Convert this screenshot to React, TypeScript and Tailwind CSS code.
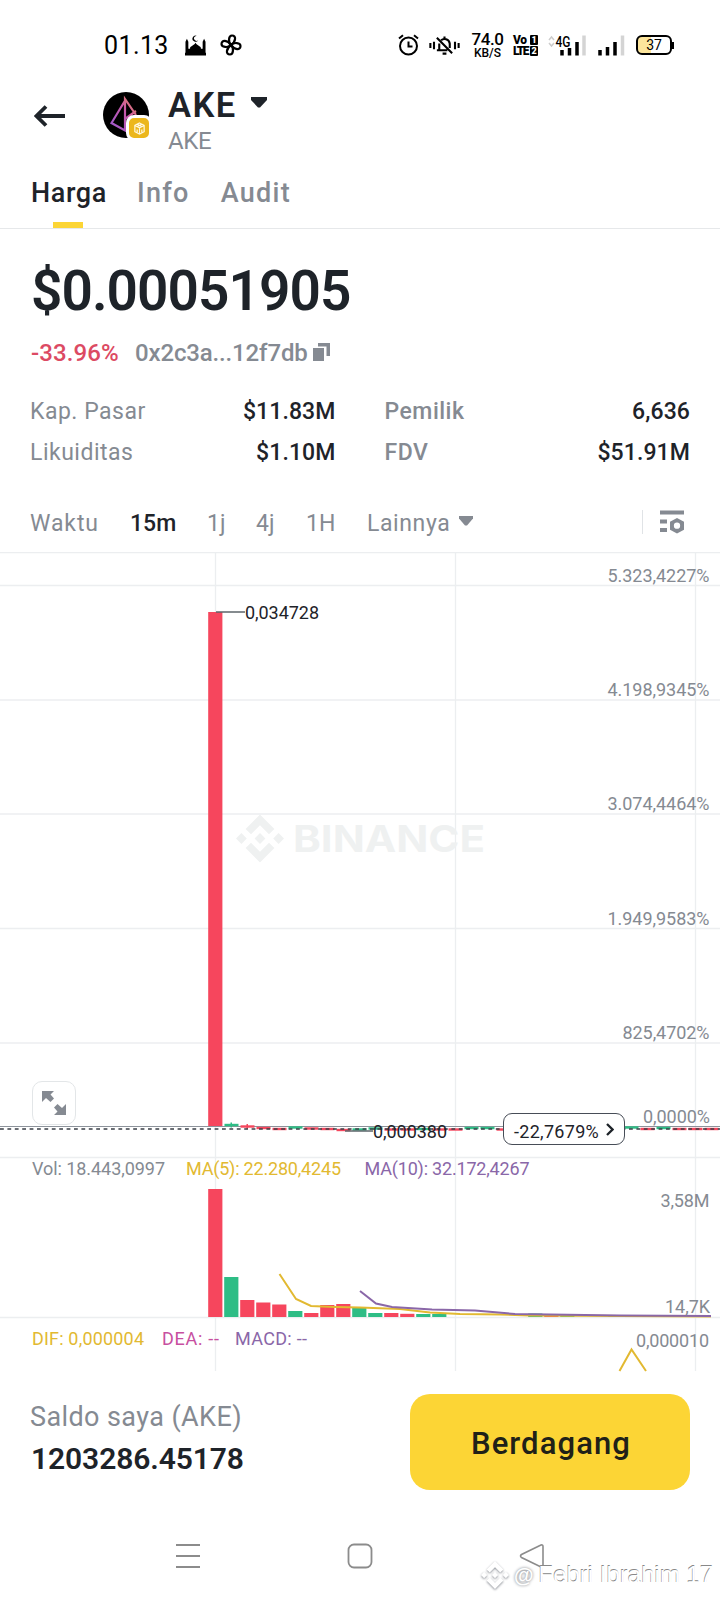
type Candle = { up: boolean; y: number; wick?: boolean };

const TABS = ["Info", "Audit"];

const GRID_Y = [33.5, 148, 262, 376.5, 491, 605.5, 765.5];
const GRID_X = [215.5, 455.5, 695.5];

const AXIS_LABELS = [
  { text: "5.323,4227%", x: 607.5, y: 30, width: 102 },
  { text: "4.198,9345%", x: 607.5, y: 144, width: 102 },
  { text: "3.074,4464%", x: 607.5, y: 258, width: 102 },
  { text: "1.949,9583%", x: 607.5, y: 373, width: 102 },
  { text: "825,4702%", x: 622.5, y: 487, width: 87 },
  { text: "0,0000%", x: 643, y: 571, width: 67 },
  { text: "3,58M", x: 660.5, y: 655, width: 49 },
  { text: "14,7K", x: 665, y: 761, width: 45 },
  { text: "0,000010", x: 636, y: 795, width: 73 },
];

const LEGENDS = [
  { text: "Vol: 18.443,0997", x: 32, y: 623, width: 133, color: "#858a92" },
  { text: "MA(5): 22.280,4245", x: 186, y: 623, width: 155, color: "#e2b931" },
  { text: "MA(10): 32.172,4267", x: 364.5, y: 623, width: 165, color: "#8a67a8" },
  { text: "DIF: 0,000004", x: 32, y: 793, width: 112, color: "#e2b931" },
  { text: "DEA: --", x: 162, y: 793, width: 57, color: "#c74fa0" },
  { text: "MACD: --", x: 235, y: 793, width: 72, color: "#8a67a8" },
];

const CANDLES: Candle[] = [
  { up: true, y: 573, wick: true },
  { up: false, y: 574.5, wick: true },
  { up: false, y: 576 },
  { up: false, y: 577 },
  { up: true, y: 575.5 },
  { up: false, y: 576.5 },
  { up: false, y: 577 },
  { up: false, y: 578 },
  { up: true, y: 577.5 },
  { up: true, y: 576.5 },
  { up: false, y: 577.5 },
  { up: false, y: 577.5 },
  { up: true, y: 577 },
  { up: false, y: 577.5 },
  { up: false, y: 577.5 },
  { up: true, y: 576 },
  { up: true, y: 576 },
  { up: false, y: 577.5 },
  { up: true, y: 577 },
  { up: true, y: 576 },
  { up: false, y: 577 },
  { up: true, y: 576 },
  { up: true, y: 576 },
  { up: true, y: 575 },
  { up: true, y: 575 },
  { up: true, y: 575.5 },
  { up: false, y: 577 },
  { up: true, y: 576 },
  { up: false, y: 577 },
  { up: false, y: 577 },
  { up: false, y: 577 },
];

const VOLUMES = [
  { up: false, h: 128 },
  { up: true, h: 40 },
  { up: false, h: 17 },
  { up: false, h: 14.5 },
  { up: false, h: 12.5 },
  { up: true, h: 6 },
  { up: false, h: 4 },
  { up: false, h: 12 },
  { up: false, h: 13 },
  { up: true, h: 9 },
  { up: true, h: 4 },
  { up: false, h: 4 },
  { up: false, h: 3.2 },
  { up: true, h: 3 },
  { up: true, h: 3 },
  { up: false, h: 0 },
  { up: false, h: 0 },
  { up: false, h: 0 },
  { up: false, h: 0 },
  { up: false, h: 0 },
  { up: true, h: 3.5 },
  { up: false, h: 2 },
  { up: true, h: 2 },
  { up: false, h: 0 },
  { up: false, h: 0 },
  { up: true, h: 2 },
];

const RED = "#f6465d";
const GREEN = "#2ebd85";

function BinanceMark({ className }: { className?: string }) {
  return (
    <svg viewBox="0 0 48 48" className={className} fill="currentColor">
      <path d="M24 0 38.4 14.4 33 19.8 24 10.8 15 19.8 9.6 14.4Z" />
      <path d="M24 48 38.4 33.6 33 28.2 24 37.2 15 28.2 9.6 33.6Z" />
      <path d="M5.4 18.6 10.8 24 5.4 29.4 0 24Z" />
      <path d="M42.6 18.6 48 24 42.6 29.4 37.2 24Z" />
      <path d="M24 18.6 29.4 24 24 29.4 18.6 24Z" />
    </svg>
  );
}

function StatusBar() {
  return (
    <div className="flex h-[88px] items-center pt-[2px] pl-[104px] text-black">
      <span className="w-[81px] text-[25px] leading-none tracking-[0.4px]">01.13</span>
      {/* mosque */}
      <svg className="h-[21px] w-[21px]" viewBox="0 0 22 21" fill="currentColor">
        <path d="M0.500 6.500 2 3.500 3.500 6.500V14H5.500C4 11.500 9 11 11 7.500 13 11 18 11.500 16.500 14H18.500V6.500L20 3.500 21.500 6.500V18H22V21H0V18H0.500Z" />
        <path d="M12.500 0.500A3.200 3.200 0 1 0 13.800 4.900 2.600 2.600 0 1 1 12.500 0.500Z" />
      </svg>
      {/* pinwheel */}
      <svg
        className="ml-[14px] h-[22px] w-[22px]"
        viewBox="0 0 22 22"
        fill="none"
        stroke="currentColor"
        strokeWidth="2.200"
        strokeLinejoin="round"
      >
        <path d="M11 11C8 8 8.500 1.500 12 1.500 16.500 1.500 16 7.500 11 11Z" />
        <path d="M11 11C14 8 20.500 8.500 20.500 12 20.500 16.500 14.500 16 11 11Z" />
        <path d="M11 11C14 14 13.500 20.500 10 20.500 5.500 20.500 6 14.500 11 11Z" />
        <path d="M11 11C8 14 1.500 13.500 1.500 10 1.500 5.500 7.500 6 11 11Z" />
      </svg>
      <svg
        className="ml-[156px] h-[22px] w-[21px]"
        viewBox="0 0 21 22"
        fill="none"
        stroke="currentColor"
        strokeWidth="2"
      >
        <circle cx="10.500" cy="12" r="8.500" />
        <path d="M10.500 7.500V12.500H14.500M1 4.500 5 1.200M20 4.500 16 1.200" />
      </svg>
      {/* muted bell with vibration marks */}
      <svg
        className="ml-[10px] h-[21px] w-[31px]"
        viewBox="0 0 32 22"
        fill="none"
        stroke="currentColor"
        strokeWidth="2.200"
      >
        <path d="M1.200 8.500V13.500M5 7V15M27 7V15M30.800 8.500V13.500" />
        <path d="M8 3 24 19M8 16H19M10.500 16V9M12.500 5.500C15 3 21 4 21.500 9V13.500M16 1.500V4M14 19.500H18" />
      </svg>
      <div className="ml-[11px] flex w-[33px] flex-col items-center">
        <span className="text-[17px] leading-[15px] font-medium tracking-[-0.4px]">74.0</span>
        <span className="mt-px text-[12px] leading-[11px] font-medium">KB/S</span>
      </div>
      <div className="ml-[9px] flex w-[25px] flex-col gap-px text-[12px] leading-[10px] font-black">
        <div className="flex justify-between">
          <span className="tracking-[-0.5px]">Vo</span>
          <span className="w-[8px] rounded-[1px] bg-black text-center text-[9px] text-white">1</span>
        </div>
        <div className="flex justify-between">
          <span className="tracking-[-1.6px]">LTE</span>
          <span className="w-[8px] rounded-[1px] bg-black text-center text-[9px] text-white">2</span>
        </div>
      </div>
      <svg className="ml-[10px] h-[22px] w-[38px]" viewBox="0 0 38 22">
        <path d="M1 6 3.500 3 6 6M1 9 3.500 12 6 9" fill="none" stroke="#ccc" strokeWidth="1.500" />
        <text x="7.500" y="12.500" fontSize="14.500" fontWeight="500" textLength="15" lengthAdjust="spacingAndGlyphs">
          4G
        </text>
        <path d="M14 21.500V16M21.500 21.500V14M29 21.500V8" stroke="#000" strokeWidth="3.500" />
        <path d="M36 21.500V1.500" stroke="#d4d4d4" strokeWidth="3.500" />
      </svg>
      <svg className="ml-[12px] h-[22px] w-[27px]" viewBox="0 0 27 22">
        <path d="M2 21.500V16M9.500 21.500V13M17 21.500V8" stroke="#000" strokeWidth="3.500" />
        <path d="M24.500 21.500V1.500" stroke="#d4d4d4" strokeWidth="3.500" />
      </svg>
      <div className="ml-[11px] flex items-center">
        <div className="flex h-[20px] w-[36px] items-center justify-center rounded-[6px] border-2 border-black bg-linear-to-r from-[#fce59c] from-40% to-white to-40% text-[14px] leading-none">
          37
        </div>
        <div className="h-[7px] w-[2px] bg-black" />
      </div>
    </div>
  );
}

function TokenHeader() {
  return (
    <header className="flex h-[64px] items-start pl-[34px] text-[#1e2329]">
      <svg className="mt-[17px] h-[22px] w-[31px]" viewBox="0 0 31 22" fill="none" stroke="currentColor" strokeWidth="3.800">
        <path d="M31 11H3M12 1.500 2.500 11 12 20.500" />
      </svg>
      <div className="relative mt-[4px] ml-[38px] h-[46px] w-[46px] rounded-full bg-black">
        <svg viewBox="0 0 46 46" className="h-full w-full" fill="none" strokeWidth="2.200">
          <defs>
            <linearGradient id="ake" x1="0" y1="1" x2="1" y2="0">
              <stop offset="0" stopColor="#9b59d0" />
              <stop offset="0.600" stopColor="#c958a8" />
              <stop offset="1" stopColor="#e88a5a" />
            </linearGradient>
          </defs>
          <path d="M23 7 8.500 31 22 38.500V7L33 23M22 27 33 19" stroke="url(#ake)" />
        </svg>
        <div className="absolute top-[23px] left-[23px] flex h-[26px] w-[26px] items-center justify-center rounded-[8px] border-[3px] border-white bg-[#ecb71c]">
          <svg viewBox="0 0 14 14" className="h-[13px] w-[13px]" fill="none" stroke="#fff8df" strokeWidth="1.300">
            <path d="M7 1 12 3.500V10.500L7 13 2 10.500V3.500ZM2 3.800 7 6.300 12 3.800M7 6.300V13M4.500 2.500 9.500 5M9.500 2.500 4.500 5M4.500 8V11M9.500 8V11" />
          </svg>
        </div>
      </div>
      <div className="ml-[19px] flex flex-col">
        <div className="flex items-center">
          <h1 className="text-[34.5px] leading-[34px] font-semibold tracking-[1.4px]">AKE</h1>
          <svg className="mb-[6px] ml-[14px] h-[11px] w-[16px]" viewBox="0 0 16 11" fill="currentColor">
            <path d="M0 0H16V3L9 10.500H7L0 3Z" />
          </svg>
        </div>
        <span className="mt-[8px] text-[24px] leading-[23px] tracking-[-0.3px] text-[#858a92]">AKE</span>
      </div>
    </header>
  );
}

function Tabs() {
  return (
    <nav className="flex h-[77px] gap-[31px] border-b border-[#e6e8ea] pl-[31px] text-[27px] leading-none font-medium">
      <div className="flex w-[75px] flex-col justify-between pt-[28px] tracking-[0.6px] text-[#1e2329]">
        <span>Harga</span>
        <span className="ml-[22px] h-[6px] w-[30px] bg-[#fcd535]" />
      </div>
      {TABS.map((tab) => (
        <span key={tab} className="pt-[28px] tracking-[1.3px] text-[#858a92]">
          {tab}
        </span>
      ))}
    </nav>
  );
}

function PriceSummary() {
  return (
    <section className="h-[162px] px-[31px] pt-[35px]">
      <p className="text-[55px] leading-none font-semibold tracking-[-0.95px] text-[#1e2329]">$0.00051905</p>
      <div className="mt-[22px] flex items-center text-[24px] leading-none font-medium">
        <span className="w-[104px] tracking-[0.1px] text-[#dc4a63]">-33.96%</span>
        <span className="tracking-[-0.15px] text-[#858a92]">0x2c3a...12f7db</span>
        <svg className="mb-[2px] ml-[5px] h-[18px] w-[17px]" viewBox="0 0 17 18" fill="#858a92">
          <path d="M0 5H11V18H0ZM5 0H17V13H13.500V3.500H5Z" />
        </svg>
      </div>
    </section>
  );
}

function Stat({ label, value, strong }: { label: string; value: string; strong?: boolean }) {
  return (
    <div className="flex h-[41px] items-center justify-between text-[23px] leading-none">
      <span className={strong ? "font-medium tracking-[0.5px] text-[#858a92]" : "tracking-[0.5px] text-[#858a92]"}>
        {label}
      </span>
      <span className="font-medium tracking-[0.1px] text-[#1e2329]">{value}</span>
    </div>
  );
}

function Intervals() {
  return (
    <div className="flex h-[79px] items-center pt-[21px] pl-[30px] text-[23px] leading-none text-[#858a92]">
      <span className="w-[100px] tracking-[0.9px]">Waktu</span>
      <span className="w-[77px] font-medium text-[#1e2329]">15m</span>
      <span className="w-[49px]">1j</span>
      <span className="w-[50px]">4j</span>
      <span className="w-[61px]">1H</span>
      <span className="w-[92px] tracking-[0.6px]">Lainnya</span>
      <svg className="mb-[4px] h-[10px] w-[14px]" viewBox="0 0 14 10" fill="currentColor">
        <path d="M0 0H14V2.500L8 9.500H6L0 2.500Z" />
      </svg>
      <span className="mb-[3px] ml-[169px] h-[24px] w-px bg-[#e0e3e6]" />
      <svg className="mb-[3px] ml-[17px] h-[24px] w-[25px]" viewBox="0 0 25 24" fill="currentColor">
        <path d="M0 0.500H24V4.500H0ZM0 9.500H7V13.500H0ZM0 18H7V22H0Z" />
        <path
          fillRule="evenodd"
          d="M17 8 24 11.800V19.700L17 23.500 10 19.700V11.800ZM17 12.500A3 3 0 1 0 17 18.800 3 3 0 1 0 17 12.500Z"
        />
      </svg>
    </div>
  );
}

function Chart() {
  return (
    <div className="relative h-[820px]">
      <svg width="720" height="820" viewBox="0 0 720 820" className="block">
        <g stroke="#eceef0" strokeWidth="1.300">
          <path d="M0 0.500H720" />
          {GRID_Y.map((y) => (
            <path key={y} d={`M0 ${y}H720`} />
          ))}
          {GRID_X.map((x) => (
            <path key={x} d={`M${x} 0V819`} />
          ))}
        </g>

        {/* watermark */}
        <svg x="236" y="262" width="48" height="49" viewBox="0 0 48 48" color="#eff1f1">
          <BinanceMark />
        </svg>
        <text
          x="293"
          y="300"
          fontSize="37.500"
          fontWeight="700"
          fill="#eff1f1"
          textLength="192"
          lengthAdjust="spacingAndGlyphs"
          className="font-['Inter',sans-serif]"
        >
          BINANCE
        </text>

        {/* price */}
        <path d="M0 574.500H720" stroke="#8d939b" strokeWidth="1" />
        <rect x="208.200" y="60" width="14.200" height="514" fill={RED} />
        {CANDLES.map((c, i) => (
          <g key={i} fill={c.up ? GREEN : RED}>
            <rect x={224.500 + i * 16} y={c.y - 1.200} width="14" height="2.400" />
            {c.wick && <rect x={230.500 + i * 16} y={c.y - 2.500} width="1.500" height="5" />}
          </g>
        ))}
        <path d="M0 577H720" stroke="#3a3f47" strokeWidth="1.500" strokeDasharray="3.800 3.600" />
        <path d="M216 60H245M345 579H373" stroke="#5d666b" strokeWidth="1.500" />
        <g fontSize="18" fill="#1e2329">
          <text x="245" y="67" textLength="74">
            0,034728
          </text>
          <text x="373" y="586" textLength="74">
            0,000380
          </text>
        </g>

        {/* volume */}
        {VOLUMES.map((v, i) => (
          <rect key={i} x={208.200 + i * 16} y={765 - v.h} width="14.200" height={v.h} fill={v.up ? GREEN : RED} />
        ))}
        <g fill="none" strokeWidth="2">
          <path
            d="M279.500 722 296 747 311 754 335 755 360 755.500 400 757 430 760.500 460 762 500 762.500 530 763.500 711 764.500"
            stroke="#e2b931"
          />
          <path
            d="M360 739 376 751.500 392 755 432 757.500 475 758.500 515 762 620 763.500 711 764"
            stroke="#8a67a8"
          />
          <path d="M619.500 819 631.500 797.500 646 819" stroke="#e2b931" />
        </g>

        {AXIS_LABELS.map((l) => (
          <text key={l.text} x={l.x} y={l.y} textLength={l.width} fontSize="18" fill="#858a92">
            {l.text}
          </text>
        ))}
        {LEGENDS.map((l) => (
          <text key={l.text} x={l.x} y={l.y} textLength={l.width} fontSize="18" fill={l.color}>
            {l.text}
          </text>
        ))}
      </svg>

      <button
        type="button"
        className="absolute top-[529px] left-[32px] flex h-[44px] w-[44px] items-center justify-center rounded-[10px] border-[1.5px] border-[#e3e6e8] bg-white"
      >
        <svg viewBox="0 0 24 24" className="h-[24px] w-[24px]" fill="#858a92">
          <path d="M0 0H12L8.500 3.500 12 7.500 8.500 11 4 7 0 11ZM24 24H12L15.500 20.500 12 16.500 15.500 13 20 17 24 13Z" />
        </svg>
      </button>
      <button
        type="button"
        className="absolute top-[561px] left-[503px] flex h-[32px] w-[122px] items-center rounded-[9px] border-[1.5px] border-[#474d57] bg-white pt-[5px] pl-[10px] text-[18px] leading-none text-[#1e2329]"
      >
        <span className="w-[92px] text-left tracking-[0.3px]">-22,7679%</span>
        <svg className="mb-[5px] h-[13px] w-[8px]" viewBox="0 0 8 13" fill="none" stroke="currentColor" strokeWidth="2.300">
          <path d="M1 1 6.500 6.500 1 12" />
        </svg>
      </button>
    </div>
  );
}

function TradeBar() {
  return (
    <footer className="flex h-[140px] items-start justify-between pr-[30px] pl-[30px]">
      <div className="flex flex-col pt-[32px] leading-none">
        <span className="text-[27px] tracking-[0.4px] text-[#858a92]">Saldo saya (AKE)</span>
        <span className="mt-[13px] ml-px text-[30px] font-semibold tracking-[-0.1px] text-[#1e2329]">1203286.45178</span>
      </div>
      <button
        type="button"
        className="mt-[22px] h-[96px] w-[280px] rounded-[20px] bg-[#fcd535] pt-[2px] pl-[2px] text-[31px] leading-none font-medium tracking-[1.1px] text-[#202118]"
      >
        Berdagang
      </button>
    </footer>
  );
}

function SystemNav() {
  return (
    <div className="relative h-[88px]">
      <div className="flex pt-[31px] pl-[175px] text-[#8c8c8c]">
        <svg className="h-[26px] w-[26px]" viewBox="0 0 26 26" stroke="currentColor" strokeWidth="2">
          <path d="M1 2H25M1 13H25M1 24H25" />
        </svg>
        <svg className="ml-[146px] h-[26px] w-[26px]" viewBox="0 0 26 26" fill="none" stroke="currentColor" strokeWidth="1.800">
          <rect x="1.500" y="1.500" width="23" height="23" rx="5.500" />
        </svg>
        <svg className="ml-[146px] h-[26px] w-[26px]" viewBox="0 0 26 26" fill="none" stroke="currentColor" strokeWidth="1.600">
          <path d="M22 2 2.500 11.500Q0.500 13 2.500 14.500L22 24Q24 24.500 24 22.500V3.500Q24 1.500 22 2Z" />
        </svg>
      </div>
      <div className="absolute top-[48px] left-[481px] flex h-[29px] items-center font-['Liberation_Sans',sans-serif] text-white">
        <BinanceMark className="h-[30px] w-[28px] [filter:drop-shadow(0_1px_1px_#8b8f96)]" />
        <span className="ml-[5px] text-[20px] font-bold [text-shadow:0_0_3px_#6b6f76]">@</span>
        <span className="ml-[5px] text-[24px] whitespace-nowrap [text-shadow:-0.5px_-1px_0_#888]">Febri Ibrahim 17</span>
      </div>
    </div>
  );
}

export default function App() {
  return (
    <div className="h-[1600px] w-[720px] overflow-hidden bg-white font-['Roboto',sans-serif]">
      <StatusBar />
      <TokenHeader />
      <Tabs />
      <PriceSummary />
      <section className="grid grid-cols-2 gap-x-[49px] px-[30px]">
        <Stat label="Kap. Pasar" value="$11.83M" />
        <Stat label="Pemilik" value="6,636" strong />
        <Stat label="Likuiditas" value="$1.10M" />
        <Stat label="FDV" value="$51.91M" strong />
      </section>
      <Intervals />
      <Chart />
      <TradeBar />
      <SystemNav />
    </div>
  );
}
